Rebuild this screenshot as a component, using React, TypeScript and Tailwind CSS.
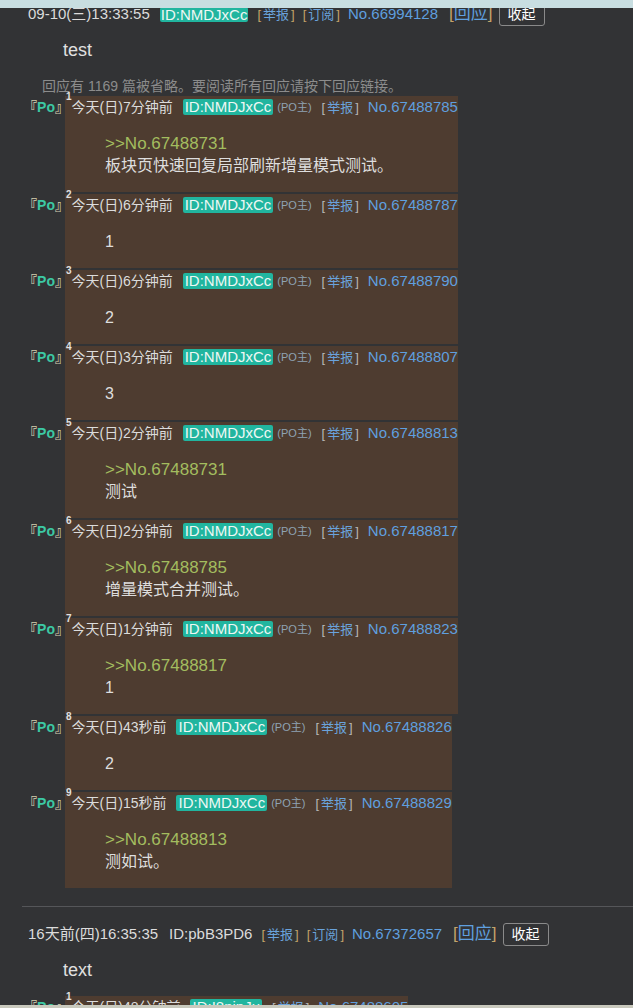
import React from "react";

const font = "font-['Liberation_Sans','Noto_Sans_CJK_SC',sans-serif]";

type Reply = {
  n: number;
  time: string;
  id: string;
  po?: boolean;
  no: string;
  quote?: string;
  text: string;
};

const replies: Reply[] = [
  { n: 1, time: "今天(日)7分钟前", id: "NMDJxCc", po: true, no: "67488785", quote: "67488731", text: "板块页快速回复局部刷新增量模式测试。" },
  { n: 2, time: "今天(日)6分钟前", id: "NMDJxCc", po: true, no: "67488787", text: "1" },
  { n: 3, time: "今天(日)6分钟前", id: "NMDJxCc", po: true, no: "67488790", text: "2" },
  { n: 4, time: "今天(日)3分钟前", id: "NMDJxCc", po: true, no: "67488807", text: "3" },
  { n: 5, time: "今天(日)2分钟前", id: "NMDJxCc", po: true, no: "67488813", quote: "67488731", text: "测试" },
  { n: 6, time: "今天(日)2分钟前", id: "NMDJxCc", po: true, no: "67488817", quote: "67488785", text: "增量模式合并测试。" },
  { n: 7, time: "今天(日)1分钟前", id: "NMDJxCc", po: true, no: "67488823", quote: "67488817", text: "1" },
  { n: 8, time: "今天(日)43秒前", id: "NMDJxCc", po: true, no: "67488826", text: "2" },
  { n: 9, time: "今天(日)15秒前", id: "NMDJxCc", po: true, no: "67488829", quote: "67488813", text: "测如试。" },
];

// small bracketed link, e.g. [举报]
function Tag({ label, gold }: { label: string; gold?: boolean }) {
  return (
    <span className="text-[13px] whitespace-nowrap">
      <span className={gold ? "text-[#c4a46a]" : "text-[#b8b8b8]"}>[</span>
      <span className="mx-[2px] text-[#6aa3dc]">{label}</span>
      <span className={gold ? "text-[#c4a46a]" : "text-[#b8b8b8]"}>]</span>
    </span>
  );
}

function ReplyRow({ r }: { r: Reply }) {
  return (
    <div className="flex mt-[2px] first:mt-0">
      {/* po label */}
      <div className="w-[65px] shrink-0 flex justify-end h-[22px] items-center">
        <span className="text-[14px] font-bold -mr-[4px] leading-[22px] whitespace-nowrap">
          <span className="text-[#d6cfb0]">『</span>
          <span className="text-[#3cc9a4]">Po</span>
          <span className="text-[#d6cfb0]">』</span>
        </span>
      </div>
      <div className="bg-[#4e3c30] w-fit">
        <div className="flex items-center h-[22px] whitespace-nowrap">
          <sup className="text-[10px] font-bold text-[#e0e0e0] self-start leading-[12px] pl-[1px]">{r.n}</sup>
          <span className="text-[14px] text-[#dcdcdc]">{r.time}</span>
          <span className="ml-[10px] bg-[#21b59f] text-[#eef8f4] text-[15px] leading-[16px] px-[2px] rounded-[2px]">
            ID:{r.id}
          </span>
          {r.po && <span className="ml-[4px] text-[11px] text-[#8fa3b3]">(PO主)</span>}
          <span className="ml-[10px]">
            <Tag label="举报" />
          </span>
          <span className="ml-[9px] text-[15px] text-[#5f9fdf]">No.{r.no}</span>
        </div>
        <div className="ml-[40px] my-[15px] text-[16px] leading-[22px] text-[#dedede]">
          {r.quote && <div className="text-[#a3bd5f] text-[17px]">&gt;&gt;No.{r.quote}</div>}
          <div>{r.text}</div>
        </div>
      </div>
    </div>
  );
}

function ThreadHeader({ time, id, badge, no }: { time: string; id: string; badge: boolean; no: string }) {
  return (
    <div className="flex items-center h-[24px] whitespace-nowrap pl-[28px]">
      <span className="text-[15px] text-[#dcdcdc]">{time}</span>
      {badge ? (
        <span className="ml-[10px] bg-[#21b59f] text-[#eef8f4] text-[15px] leading-[15px] px-[1px] rounded-[2px]">ID:{id}</span>
      ) : (
        <span className="ml-[11px] text-[15px] text-[#dcdcdc]">ID:{id}</span>
      )}
      <span className="ml-[9px]">
        <Tag label="举报" gold />
      </span>
      <span className="ml-[8px]">
        <Tag label="订阅" gold />
      </span>
      <span className="ml-[8px] text-[15px] text-[#5f9fdf]">No.{no}</span>
      <span className="ml-[11px] text-[17px]">
        <span className="text-[#c4a46a]">[</span>
        <span className="text-[#5f9fdf]">回应</span>
        <span className="text-[#c4a46a]">]</span>
      </span>
      <button className="ml-[6px] h-[23px] w-[46px] border border-[#8a8a8a] rounded-[3px] text-[14px] text-white leading-none">
        收起
      </button>
    </div>
  );
}

export default function App() {
  return (
    <div className={`min-h-screen bg-[#323335] ${font}`}>
      {/* browser strip lying over the top of the page */}
      <div className="sticky top-0 z-20 h-[8px] bg-[#c8dee1] border-b-2 border-[#c8dee1]"></div>

      {/* thread 1 */}
      <div className="-mt-[6px]">
        <ThreadHeader time="09-10(三)13:33:55" id="NMDJxCc" badge no="66994128" />
        <div className="ml-[63px] mt-[13px] mb-[15px] text-[18px] leading-[22px] text-[#e0e0e0]">test</div>
        <div className="pl-[42px] text-[14px] leading-[20px] text-[#8c8c8c] mt-[2px]">
          回应有 1169 篇被省略。要阅读所有回应请按下回应链接。
        </div>
        <div>
          {replies.map((r) => (
            <ReplyRow key={r.n} r={r} />
          ))}
        </div>
      </div>

      <div className="ml-[22px] mt-[18px] border-t border-[#555659]"></div>

      {/* thread 2 */}
      <div className="pt-[15px]">
        <ThreadHeader time="16天前(四)16:35:35" id="pbB3PD6" badge={false} no="67372657" />
        <div className="ml-[63px] mt-[13px] mb-[15px] text-[18px] leading-[22px] text-[#e0e0e0]">text</div>
        <ReplyRow
          r={{ n: 1, time: "今天(日)48分钟前", id: "I8nipJu", no: "67488605", text: "…" }}
        />
      </div>

      <div className="fixed bottom-0 left-0 right-0 h-[3px] bg-[#c9c9bd]"></div>
    </div>
  );
}
